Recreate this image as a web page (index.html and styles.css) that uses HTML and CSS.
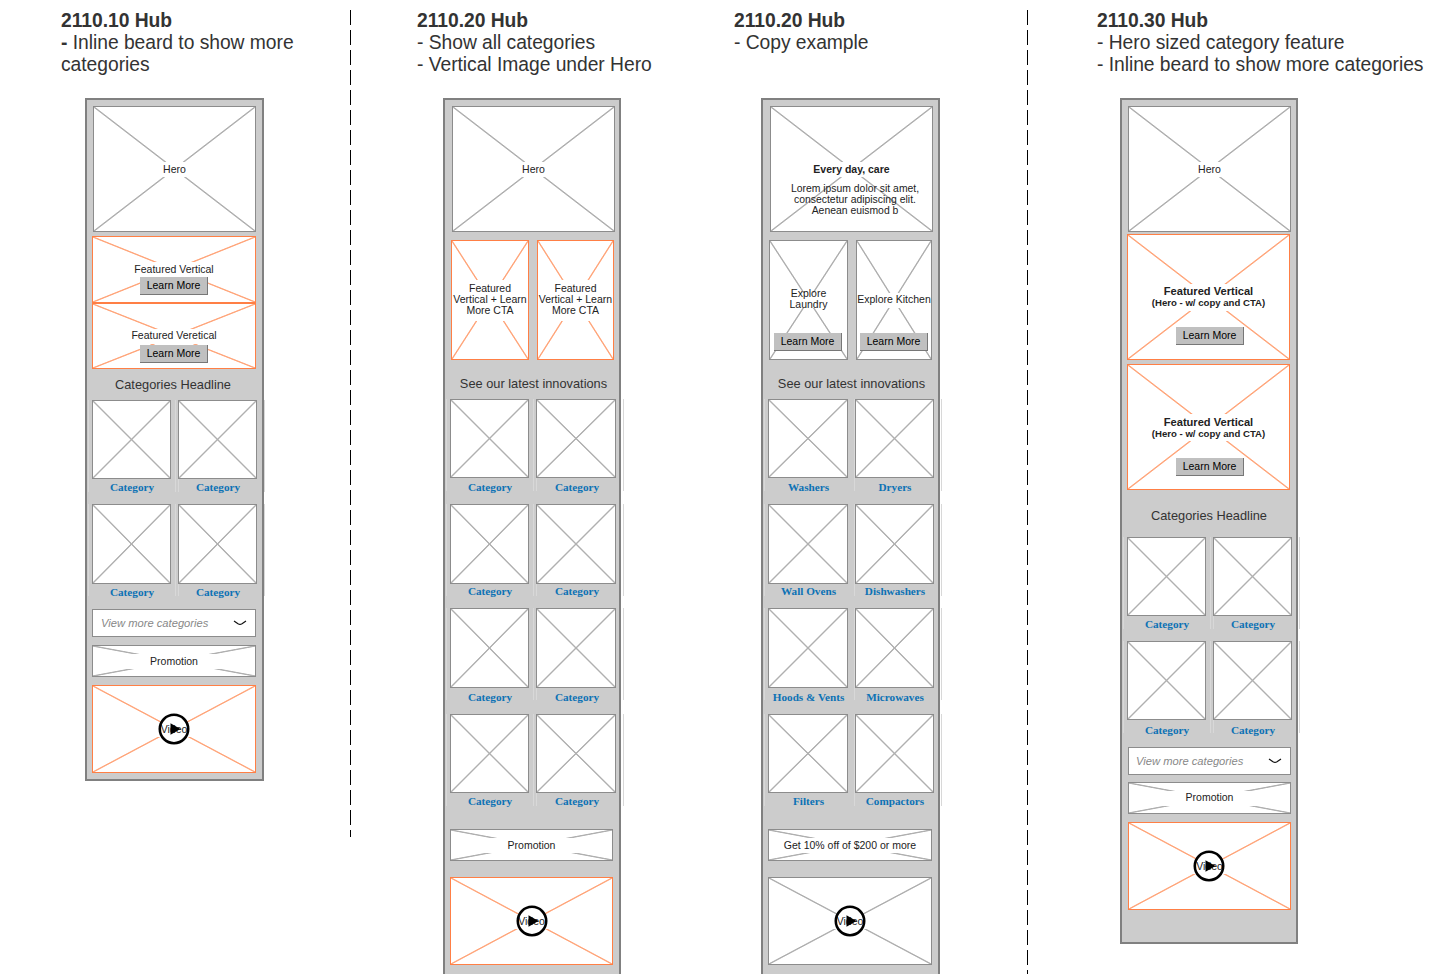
FILE: index.html
```html
<!DOCTYPE html>
<html lang="en">
<head>
    <meta charset="UTF-8">
    <meta name="viewport" content="width=device-width, initial-scale=1.0">
    <title>2110 Hub wireframes</title>
    <link rel="stylesheet" href="styles.css">
</head>
<body>
    <div class="board">
        <section class="hub hub-a">
            <header class="notes">
                <h2>2110.10 Hub</h2>
                <p><b>-</b> Inline beard to show more</p>
                <p>categories</p>
            </header>
            <div class="phone">
                <div class="box hero">Hero</div>
                <div class="box feature featured">Featured Vertical<span class="learn">Learn More</span></div>
                <div class="box feature featured second">Featured Veretical<span class="learn">Learn More</span></div>
                <h3 class="headline">Categories Headline</h3>
                <div class="categories">
                    <div class="row">
                        <div class="category"><div class="box thumb"></div><a>Category</a></div>
                        <div class="category"><div class="box thumb"></div><a>Category</a></div>
                    </div>
                    <div class="row">
                        <div class="category"><div class="box thumb"></div><a>Category</a></div>
                        <div class="category"><div class="box thumb"></div><a>Category</a></div>
                    </div>
                </div>
                <div class="more">View more categories
                    <svg width="14" height="6" viewBox="0 0 14 6"><path d="M1 1L5 3.8Q7 5 9 3.8L13 1" /></svg>
                </div>
                <div class="box promo">Promotion</div>
                <div class="box video featured">Video
                    <svg class="play" width="32" height="32" viewBox="0 0 32 32"><circle cx="16" cy="16" r="14.2" /><path d="M12.5 10.2L22.5 16L12.5 21.8Z" /></svg>
                </div>
            </div>
        </section>

        <div class="divider short"></div>

        <section class="hub hub-b">
            <header class="notes">
                <h2>2110.20 Hub</h2>
                <p>- Show all categories</p>
                <p>- Vertical Image under Hero</p>
            </header>
            <div class="phone tall">
                <div class="box hero">Hero</div>
                <div class="pair">
                    <div class="box featured">Featured<br>Vertical + Learn<br>More CTA</div>
                    <div class="box featured">Featured<br>Vertical + Learn<br>More CTA</div>
                </div>
                <h3 class="headline">See our latest innovations</h3>
                <div class="categories">
                    <div class="row">
                        <div class="category"><div class="box thumb"></div><a>Category</a></div>
                        <div class="category"><div class="box thumb"></div><a>Category</a></div>
                    </div>
                    <div class="row">
                        <div class="category"><div class="box thumb"></div><a>Category</a></div>
                        <div class="category"><div class="box thumb"></div><a>Category</a></div>
                    </div>
                    <div class="row">
                        <div class="category"><div class="box thumb"></div><a>Category</a></div>
                        <div class="category"><div class="box thumb"></div><a>Category</a></div>
                    </div>
                    <div class="row">
                        <div class="category"><div class="box thumb"></div><a>Category</a></div>
                        <div class="category"><div class="box thumb"></div><a>Category</a></div>
                    </div>
                </div>
                <div class="box promo">Promotion</div>
                <div class="box video featured">Video
                    <svg class="play" width="32" height="32" viewBox="0 0 32 32"><circle cx="16" cy="16" r="14.2" /><path d="M12.5 10.2L22.5 16L12.5 21.8Z" /></svg>
                </div>
            </div>
        </section>

        <section class="hub hub-c">
            <header class="notes">
                <h2>2110.20 Hub</h2>
                <p>- Copy example</p>
            </header>
            <div class="phone tall">
                <div class="box hero"><b>Every day, care</b>
                    <p class="copy">Lorem ipsum dolor sit amet,<br>consectetur adipiscing elit.<br>Aenean euismod b</p>
                </div>
                <div class="pair">
                    <div class="box">Explore<br>Laundry<span class="learn">Learn More</span></div>
                    <div class="box">Explore Kitchen<span class="learn">Learn More</span></div>
                </div>
                <h3 class="headline">See our latest innovations</h3>
                <div class="categories">
                    <div class="row">
                        <div class="category"><div class="box thumb"></div><a>Washers</a></div>
                        <div class="category"><div class="box thumb"></div><a>Dryers</a></div>
                    </div>
                    <div class="row">
                        <div class="category"><div class="box thumb"></div><a>Wall Ovens</a></div>
                        <div class="category"><div class="box thumb"></div><a>Dishwashers</a></div>
                    </div>
                    <div class="row">
                        <div class="category"><div class="box thumb"></div><a>Hoods &amp; Vents</a></div>
                        <div class="category"><div class="box thumb"></div><a>Microwaves</a></div>
                    </div>
                    <div class="row">
                        <div class="category"><div class="box thumb"></div><a>Filters</a></div>
                        <div class="category"><div class="box thumb"></div><a>Compactors</a></div>
                    </div>
                </div>
                <div class="box promo">Get 10% off of $200 or more</div>
                <div class="box video">Video
                    <svg class="play" width="32" height="32" viewBox="0 0 32 32"><circle cx="16" cy="16" r="14.2" /><path d="M12.5 10.2L22.5 16L12.5 21.8Z" /></svg>
                </div>
            </div>
        </section>

        <div class="divider"></div>

        <section class="hub hub-d">
            <header class="notes">
                <h2>2110.30 Hub</h2>
                <p>- Hero sized category feature</p>
                <p>- Inline beard to show more categories</p>
            </header>
            <div class="phone">
                <div class="box hero">Hero</div>
                <div class="box feature featured"><b>Featured Vertical<br><small>(Hero - w/ copy and CTA)</small></b><span class="learn">Learn More</span></div>
                <div class="box feature featured second"><b>Featured Vertical<br><small>(Hero - w/ copy and CTA)</small></b><span class="learn">Learn More</span></div>
                <h3 class="headline">Categories Headline</h3>
                <div class="categories">
                    <div class="row">
                        <div class="category"><div class="box thumb"></div><a>Category</a></div>
                        <div class="category"><div class="box thumb"></div><a>Category</a></div>
                    </div>
                    <div class="row">
                        <div class="category"><div class="box thumb"></div><a>Category</a></div>
                        <div class="category"><div class="box thumb"></div><a>Category</a></div>
                    </div>
                </div>
                <div class="more">View more categories
                    <svg width="14" height="6" viewBox="0 0 14 6"><path d="M1 1L5 3.8Q7 5 9 3.8L13 1" /></svg>
                </div>
                <div class="box promo">Promotion</div>
                <div class="box video featured">Video
                    <svg class="play" width="32" height="32" viewBox="0 0 32 32"><circle cx="16" cy="16" r="14.2" /><path d="M12.5 10.2L22.5 16L12.5 21.8Z" /></svg>
                </div>
            </div>
        </section>
    </div>
</body>
</html>
```

FILE: styles.css
```css
* {
    box-sizing: border-box;
}

body {
    margin: 0;
    background: #fff;
    color: #333;
    font-family: "Liberation Sans", Arial, sans-serif;
}

h2, h3, p {
    margin: 0;
}

.board {
    display: flex;
    height: 974px;
    overflow: hidden;
}

.hub {
    flex: none;
}

.hub-a { width: 350px; padding-left: 61px; }
.hub-b { width: 383px; padding-left: 66px; }
.hub-c { width: 293px; }
.hub-d { width: 424px; padding-left: 69px; }

.notes {
    height: 98px;
    padding-top: 10px;
    font-size: 19.3px;
    letter-spacing: -.04px;
    line-height: 22px;
    white-space: nowrap;
}

.notes h2 {
    font-size: 19.3px;
    line-height: 22px;
}

/* dashed rule between the versions */
.divider {
    flex: none;
    width: 1px;
    margin-top: 10px;
    background: repeating-linear-gradient(#000 0 15px, transparent 15px 20px);
}

.divider.short {
    height: 827px;
}

/* phone frame */
.phone {
    width: 178px;
    height: 846px;
    padding: 6px 0 0 5px;
    border: 2px solid #808080;
    background: #ccc;
}

.phone.tall {
    height: 900px;
}

.hub-a .phone { width: 179px; height: 683px; margin-left: 24px; }
.hub-b .phone { margin-left: 26px; }
.hub-c .phone { width: 179px; margin-left: 27px; }
.hub-d .phone { margin-left: 23px; }

/* placeholder box, crossed out with a blank strip behind its label */
.box {
    --line: #b0b0b0;
    --gap: 15px;
    position: relative;
    display: flex;
    align-items: center;
    justify-content: center;
    border: 1px solid #8c8c8c;
    background:
        linear-gradient(#fff, #fff) center / 100% var(--gap) no-repeat,
        linear-gradient(to top right, transparent calc(50% - 1.1px), var(--line) calc(50% - .3px), var(--line) calc(50% + .3px), transparent calc(50% + 1.1px)),
        linear-gradient(to bottom right, transparent calc(50% - 1.1px), var(--line) calc(50% - .3px), var(--line) calc(50% + .3px), transparent calc(50% + 1.1px)),
        #fff;
    color: #222;
    font-size: 10.5px;
    line-height: 11px;
    text-align: center;
    white-space: nowrap;
}

.box.featured {
    --line: #ffa77d;
    border-color: #ff7f45;
}

.hero {
    width: 163px;
    height: 126px;
    margin-left: 1px;
}

.hub-b .hero, .hub-c .hero {
    margin-left: 2px;
}

.copy {
    position: absolute;
    top: 76px;
    left: 4px;
    width: 160px;
    font-size: 10.4px;
}

.feature {
    width: 164px;
    height: 67px;
    margin-top: 4px;
}

.feature.second {
    height: 66px;
    margin-top: 0;
    padding-bottom: 2px;
}

.hub-d .feature {
    --gap: 27px;
    width: 163px;
    height: 126px;
    margin-top: 2px;
    font-size: 11.1px;
    line-height: 12px;
}

.hub-d .feature.second {
    margin-top: 4px;
    padding: 2px 0 0;
}

.feature small {
    display: block;
    font-size: 9.6px;
}

.learn {
    position: absolute;
    left: 47px;
    bottom: 7px;
    width: 68px;
    height: 18px;
    border: solid #777;
    border-width: 0 1px 1px 0;
    background: #c0c0c0;
    color: #000;
    font-size: 10.5px;
    line-height: 17px;
}

.feature.second .learn { bottom: 5px; }
.hub-d .feature .learn { left: 48px; bottom: 14px; }
.hub-d .feature.second .learn { bottom: 13px; }

.pair {
    display: flex;
    gap: 8px;
    margin: 8px 0 0 1px;
}

.pair .box {
    width: 78px;
    height: 120px;
    padding-bottom: 2px;
}

.pair .box:last-child { width: 77px; }
.pair .featured { --gap: 41px; }
.hub-c .pair .box:first-child { width: 79px; }
.hub-c .pair .box:last-child { width: 76px; }
.pair .learn { left: 4px; bottom: 8px; }
.pair .box:last-child .learn { left: 3px; }

.headline {
    width: 164px;
    height: 31px;
    color: #333;
    font-size: 12.8px;
    font-weight: normal;
    line-height: 31px;
    text-align: center;
    white-space: nowrap;
}

.hub-a .headline { width: 162px; }
.hub-b .headline, .hub-c .headline { width: 167px; height: 39px; line-height: 48px; }
.hub-d .headline { height: 47px; line-height: 52px; }

/* category grid */
.row {
    display: flex;
    gap: 2px;
    height: 92px;
    margin-left: -4px;
}

.row:nth-child(2) { margin-top: 12px; }
.row:nth-child(3) { margin-top: 12px; }
.row:nth-child(4) { margin-top: 14px; }
.hub-b .row:nth-child(2), .hub-c .row:nth-child(2) { margin-top: 13px; }

.category {
    display: flex;
    flex: none;
    flex-direction: column;
    width: 88px;
    padding-left: 3px;
    border: solid #d8d8d8;
    border-width: 0 1px;
}

.category:last-child {
    width: 87px;
    padding-left: 0;
}

.hub-b .category:last-child, .hub-c .category:last-child { width: 88px; }
.hub-c .category:first-child { border-right-color: transparent; }

.category .thumb {
    --gap: 0;
    flex: none;
    width: 79px;
    height: 79px;
}

.category:last-child .thumb { margin-left: -1px; }
.hub-b .category:last-child .thumb { width: 80px; }
.hub-c .category:first-child .thumb { width: 80px; }
.hub-c .category:last-child .thumb { margin-left: 0; }
.row:nth-child(2) .thumb, .row:nth-child(3) .thumb { height: 80px; }
.hub-d .row:nth-child(2) .thumb { height: 79px; }

.category a {
    width: 80px;
    color: #0d72b5;
    font: bold 11.2px/16px "Liberation Serif", "Times New Roman", serif;
    text-align: center;
    white-space: nowrap;
}

.category:last-child a { width: 78px; }
.hub-b .category a { width: 80px; }
.hub-c .category a { width: 81px; }
.hub-c .category:last-child a { width: 80px; }
.hub-b .row:first-child a, .hub-c .row:first-child a { margin-top: 1px; }
.hub-b .row:nth-child(2) a, .hub-c .row:nth-child(2) a { margin-top: -1px; }
.hub-b .row:nth-child(3) a, .hub-c .row:nth-child(3) a { margin-top: 1px; }
.hub-d .row:nth-child(2) a { margin-top: 2px; }

/* collapsed category list */
.more {
    display: flex;
    align-items: center;
    justify-content: space-between;
    width: 164px;
    height: 28px;
    margin-top: 13px;
    padding: 0 8px 0 8px;
    border: 1px solid #8c8c8c;
    background: #fff;
    color: #888;
    font-size: 11.2px;
    font-style: italic;
}

.hub-d .more { padding-left: 7px; }

.more path {
    fill: none;
    stroke: #111;
    stroke-width: 1.2;
}

.promo {
    width: 164px;
    height: 32px;
    margin-top: 8px;
}

.video {
    width: 164px;
    height: 88px;
    margin-top: 8px;
}

.hub-b .promo, .hub-c .promo { margin-top: 23px; }
.hub-b .video, .hub-c .video { margin-top: 16px; }
.hub-b .promo, .hub-b .video { width: 163px; }
.hub-d .more, .hub-d .promo, .hub-d .video { width: 163px; margin-left: 1px; }
.hub-d .more { margin-top: 14px; }
.hub-d .promo { margin-top: 7px; padding-bottom: 1px; }

.play {
    position: absolute;
    top: 27px;
    left: 65.3px;
}

.hub-b .play { left: 64.7px; }
.hub-d .play { left: 64.2px; }

.play circle {
    fill: none;
    stroke: #000;
    stroke-width: 2.6;
}
```
